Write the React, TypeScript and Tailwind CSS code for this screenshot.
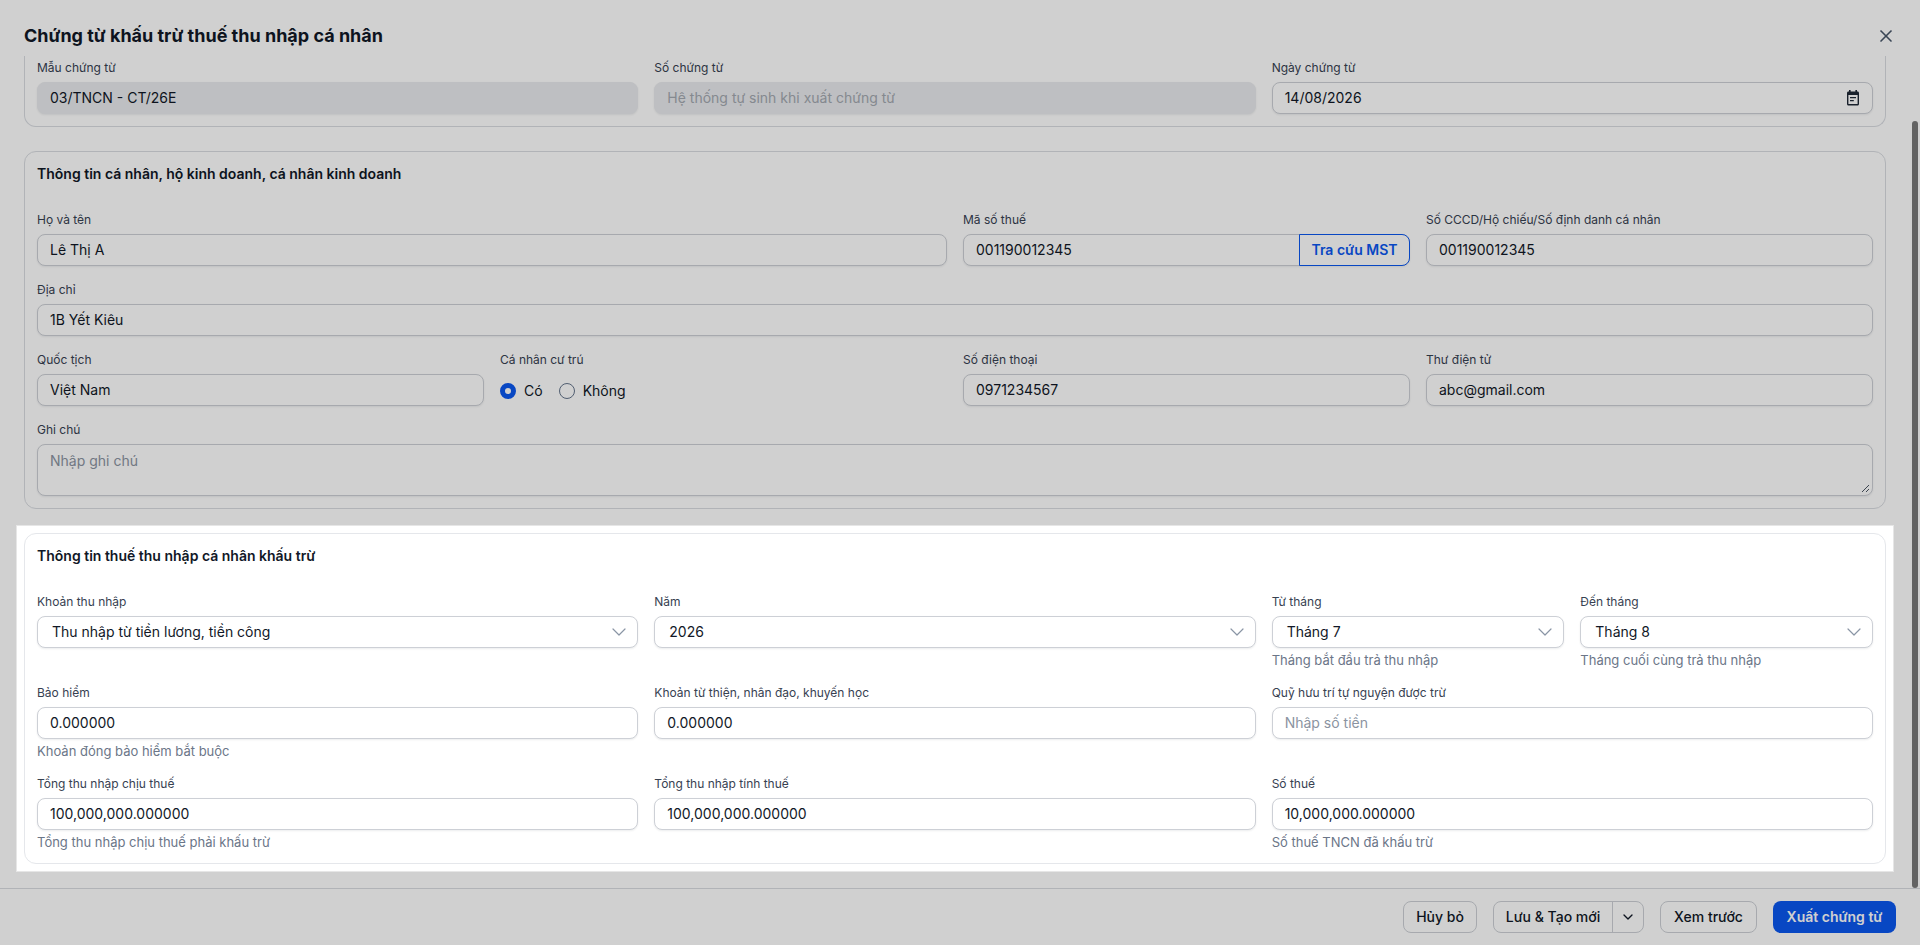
import React from "react";
import { X, ChevronDown } from "lucide-react";

const font = "font-['Inter',sans-serif]";
const base = "h-8 w-full rounded-lg border px-3 flex items-center text-sm text-[#111827] shadow-[0_1px_2px_rgba(16,24,40,0.08)]";
const normal = "border-[#cdd0d6] bg-white";
const muted = "border-[#e9ebee] bg-[#e9ebee]";

function Label({ children }: { children: React.ReactNode }) {
  return <div className="mb-1.5 h-4 text-xs leading-4 text-[#374151]">{children}</div>;
}
function Hint({ children }: { children: React.ReactNode }) {
  return <div className="mt-1 h-[17px] text-[13px] leading-[17px] text-[#6b7688]">{children}</div>;
}
function Field({ label, value, placeholder, hint, disabled, select, className }: { label: string; value?: string; placeholder?: string; hint?: string; disabled?: boolean; select?: boolean; className?: string }) {
  return (
    <div className={className}>
      <Label>{label}</Label>
      <div className={`${base} ${disabled ? muted : normal} ${select ? "justify-between" : ""}`}>
        <span className={`${value ? "" : disabled ? "text-[#a3a8b0]" : "text-[#8b93a1]"} ${select ? "pl-0.5" : ""}`}>{value || placeholder}</span>
        {select && <ChevronDown size={24} strokeWidth={1.2} className="-mr-1.5 text-[#8a95a5]" />}
      </div>
      {hint && <Hint>{hint}</Hint>}
    </div>
  );
}

function Calendar() {
  return (
    <svg width="18" height="18" viewBox="0 0 18 18" className="-mr-0.5 text-[#1f2937]">
      <path fill="currentColor" d="M5 1h1.6v1.5h4.8V1H13v1.5h.5c.9 0 1.500.7 1.500 1.500v11c0 .9-.6 1.500-1.500 1.500h-9C3.600 16.500 3 15.900 3 15V4c0-.8.6-1.500 1.500-1.500H5V1Zm-.6 5v9.100h9.200V6H4.400Z" />
      <path fill="currentColor" d="M6 8h6v1.300H6zM6 11h3.800v1.300H6z" />
    </svg>
  );
}

function Radio({ checked, label }: { checked?: boolean; label: string }) {
  return (
    <div className="flex items-center gap-2">
      {checked ? (
        <span className="h-4 w-4 rounded-full border-[5px] border-[#0b57f0] bg-white" />
      ) : (
        <span className="h-4 w-4 rounded-full border border-[#64748b] bg-white" />
      )}
      <span className="text-sm text-[#111827]">{label}</span>
    </div>
  );
}

export default function App() {
  return (
    <div className={`${font} relative flex h-[945px] w-full flex-col overflow-hidden bg-white`}>
      <div className="flex h-14 shrink-0 items-center justify-between pl-6 pr-6 pt-4">
        <h1 className="text-lg font-bold text-[#111827]">Chứng từ khấu trừ thuế thu nhập cá nhân</h1>
        <X size={20} strokeWidth={2} className="text-[#475569]" />
      </div>

      <div className="relative min-h-0 flex-1 overflow-hidden pl-6 pr-[34px]">
        <div className="-mt-[1px] rounded-b-xl border border-t-0 border-[#d9dce1] px-3 pb-3 pt-[5px]">
          <div className="grid grid-cols-3 gap-4">
            <Field label="Mẫu chứng từ" value="03/TNCN - CT/26E" disabled />
            <Field label="Số chứng từ" placeholder="Hệ thống tự sinh khi xuất chứng từ" disabled />
            <div>
              <Label>Ngày chứng từ</Label>
              <div className={`${base} ${normal} justify-between`}>
                <span>14/08/2026</span>
                <Calendar />
              </div>
            </div>
          </div>
        </div>

        <div className="mt-6 rounded-xl border border-[#d9dce1] p-3">
          <div className="mb-7 h-5 text-sm font-semibold leading-5 text-[#111827]">Thông tin cá nhân, hộ kinh doanh, cá nhân kinh doanh</div>
          <div className="grid grid-cols-4 gap-4">
            <Field className="col-span-2" label="Họ và tên" value="Lê Thị A" />
            <div>
              <Label>Mã số thuế</Label>
              <div className={`${base} ${normal} relative`}>
                <span>001190012345</span>
                <div className="absolute -right-px -top-px flex h-8 w-[111px] items-center justify-center rounded-r-lg border border-[#0b57f0] bg-white text-sm font-semibold text-[#0b57f0]">Tra cứu MST</div>
              </div>
            </div>
            <Field label="Số CCCD/Hộ chiếu/Số định danh cá nhân" value="001190012345" />
            <Field className="col-span-4" label="Địa chỉ" value="1B Yết Kiêu" />
            <Field label="Quốc tịch" value="Việt Nam" />
            <div>
              <Label>Cá nhân cư trú</Label>
              <div className="flex h-8 items-center gap-4 pt-0.5">
                <Radio checked label="Có" />
                <Radio label="Không" />
              </div>
            </div>
            <Field label="Số điện thoại" value="0971234567" />
            <Field label="Thư điện tử" value="abc@gmail.com" />
            <div className="col-span-4">
              <Label>Ghi chú</Label>
              <div className="relative h-[52px] w-full rounded-lg border border-[#cdd0d6] bg-white px-3 py-1 text-sm leading-6 text-[#8b93a1] shadow-[0_1px_2px_rgba(16,24,40,0.08)]">
                Nhập ghi chú
                <svg width="10" height="10" viewBox="0 0 10 10" className="absolute bottom-0.5 right-0.5 text-[#4b5563]">
                  <path d="M9 2 2 9M9 6 6 9" stroke="currentColor" strokeWidth="1" />
                </svg>
              </div>
            </div>
          </div>
        </div>

        <div className="relative z-20 -mx-2 mt-4 bg-white p-2 shadow-[inset_0_0_0_1px_#e6e6e6]">
          <div className="rounded-xl border border-[#e5e7eb] bg-white p-3">
            <div className="mb-7 h-5 text-sm font-semibold leading-5 text-[#111827]">Thông tin thuế thu nhập cá nhân khấu trừ</div>
            <div className="grid grid-cols-3 gap-4">
              <Field label="Khoản thu nhập" value="Thu nhập từ tiền lương, tiền công" select />
              <Field label="Năm" value="2026" select />
              <div className="grid grid-cols-2 gap-4">
                <Field label="Từ tháng" value="Tháng 7" select hint="Tháng bắt đầu trả thu nhập" />
                <Field label="Đến tháng" value="Tháng 8" select hint="Tháng cuối cùng trả thu nhập" />
              </div>
              <Field label="Bảo hiểm" value="0.000000" hint="Khoản đóng bảo hiểm bắt buộc" />
              <Field label="Khoản từ thiện, nhân đạo, khuyến học" value="0.000000" />
              <Field label="Quỹ hưu trí tự nguyện được trừ" placeholder="Nhập số tiền" />
              <Field label="Tổng thu nhập chịu thuế" value="100,000,000.000000" hint="Tổng thu nhập chịu thuế phải khấu trừ" />
              <Field label="Tổng thu nhập tính thuế" value="100,000,000.000000" />
              <Field label="Số thuế" value="10,000,000.000000" hint="Số thuế TNCN đã khấu trừ" />
            </div>
          </div>
        </div>

        <div className="absolute bottom-0 right-[2px] top-[65px] w-1.5 rounded-full bg-[#7a7a7a]" />
      </div>

      <div className="flex h-[57px] shrink-0 items-center justify-end gap-4 border-t border-[#d9dce1] pl-6 pr-6 text-sm font-medium text-[#111827]">
        <div className="flex h-8 w-[74px] items-center justify-center rounded-lg border border-[#cdd0d6]">Hủy bỏ</div>
        <div className="flex h-8 w-[151px] items-center rounded-lg border border-[#cdd0d6]">
          <span className="flex-1 text-center">Lưu &amp; Tạo mới</span>
          <span className="flex h-full w-[31px] items-center justify-center border-l border-[#cdd0d6]">
            <ChevronDown size={16} />
          </span>
        </div>
        <div className="flex h-8 w-[97px] items-center justify-center rounded-lg border border-[#cdd0d6]">Xem trước</div>
        <div className="flex h-8 w-[123px] items-center justify-center rounded-lg bg-[#0b57f0] font-semibold text-white">Xuất chứng từ</div>
      </div>

      <div className="absolute inset-0 z-10 bg-black/[0.184]" />
    </div>
  );
}
